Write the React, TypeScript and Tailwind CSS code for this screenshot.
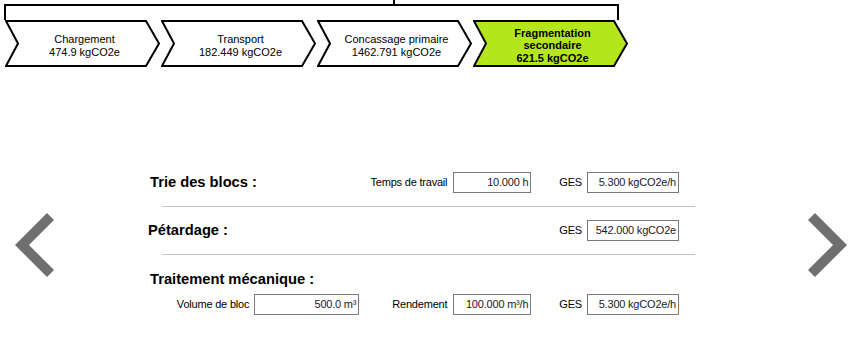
import React from 'react';

type Step = { lines: string[]; active?: boolean };

const steps: Step[] = [
  { lines: ['Chargement', '474.9 kgCO2e'] },
  { lines: ['Transport', '182.449 kgCO2e'] },
  { lines: ['Concassage primaire', '1462.791 kgCO2e'] },
  { lines: ['Fragmentation', 'secondaire', '621.5 kgCO2e'], active: true },
];

function Chevron({ step }: { step: Step }) {
  return (
    <div className="relative w-[155px] h-[47px] flex items-center justify-center">
      <svg className="absolute inset-0" width="155" height="47" viewBox="0 0 155 47">
        <polygon
          points="1,1 141,1 154,23.5 141,46 1,46 13,23.5"
          fill={step.active ? '#b5e61d' : '#ffffff'}
          stroke="#000"
          strokeWidth="2"
        />
      </svg>
      <div
        className={`relative pt-[4px] pl-[4px] text-center text-[11px] text-black ${
          step.active ? 'font-bold leading-[12.5px]' : 'leading-[13px]'
        }`}
      >
        {step.lines.map((l) => (
          <div key={l}>{l}</div>
        ))}
      </div>
    </div>
  );
}

function Field({ value, width }: { value: string; width: string }) {
  return (
    <div
      className={`${width} h-[21px] border border-[#7a7a7a] bg-white flex items-center justify-end pr-[2px] text-[11px] leading-[13px] tracking-[-0.2px] text-[#1a1a2a]`}
    >
      {value}
    </div>
  );
}

function Label({ children }: { children: React.ReactNode }) {
  return <span className="text-[11px] leading-[13px] tracking-[-0.2px] text-black">{children}</span>;
}

function Ges({ value }: { value: string }) {
  return (
    <div className="flex items-center">
      <Label>GES</Label>
      <div className="ml-[5px]">
        <Field value={value} width="w-[92px]" />
      </div>
    </div>
  );
}

function Arrow({ dir }: { dir: 'left' | 'right' }) {
  const pts =
    dir === 'left'
      ? '0,32 32,0 39,7 14,32 39,57 32,64'
      : '40,32 8,0 1,7 26,32 1,57 8,64';
  return (
    <svg width="41" height="65" viewBox="0 0 41 65" className="shrink-0">
      <polygon points={pts} fill="#6f6f6f" />
    </svg>
  );
}

export default function App() {
  return (
    <div className="w-[858px] h-[338px] bg-white overflow-hidden font-['Liberation_Sans',Arial,sans-serif] text-black">
      {/* process steps */}
      <div className="pt-[4px]">
        <div className="relative ml-[4px] w-[615px] h-[16px] border-t-2 border-x-2 border-black">
          <div className="absolute left-[387px] top-[-6px] w-[2px] h-[4px] bg-black" />
        </div>
        <div className="flex ml-[5px] gap-[1px]">
          {steps.map((s) => (
            <Chevron key={s.lines[0]} step={s} />
          ))}
        </div>
      </div>

      {/* detail panel */}
      <div className="flex items-start pt-[105px]">
        <div className="ml-[15px] mt-[41px]">
          <Arrow dir="left" />
        </div>

        <div className="ml-[92px] w-[547px]">
          <div className="flex items-center h-[21px] pr-[16px]">
            <span className="font-bold text-[14.7px] ml-[2px]">Trie des blocs :</span>
            <div className="ml-auto flex items-center">
              <Label>Temps de travail</Label>
              <div className="ml-[6px] flex">
                <Field value="10.000 h" width="w-[78px]" />
              </div>
              <div className="ml-[28px] flex">
                <Ges value="5.300 kgCO2e/h" />
              </div>
            </div>
          </div>

          <div className="ml-[14px] mt-[13px] h-px bg-[#c4c4c4]" />

          <div className="flex items-center h-[21px] mt-[13px] pr-[16px]">
            <span className="font-bold text-[14.7px]">Pétardage :</span>
            <div className="ml-auto flex">
              <Ges value="542.000 kgCO2e" />
            </div>
          </div>

          <div className="ml-[14px] mt-[13px] h-px bg-[#c4c4c4]" />

          <div className="mt-[16px] ml-[2px] font-bold text-[14.7px] leading-[17px]">
            Traitement mécanique :
          </div>
          <div className="flex items-center justify-end h-[21px] mt-[6px] pr-[16px]">
            <Label>Volume de bloc</Label>
            <div className="ml-[5px] flex">
              <Field value="500.0 m³" width="w-[105px]" />
            </div>
            <div className="ml-[33px] flex items-center">
              <Label>Rendement</Label>
            </div>
            <div className="ml-[6px] flex">
              <Field value="100.000 m³/h" width="w-[78px]" />
            </div>
            <div className="ml-[28px] flex">
              <Ges value="5.300 kgCO2e/h" />
            </div>
          </div>
        </div>

        <div className="ml-auto mr-[10px] mt-[41px]">
          <Arrow dir="right" />
        </div>
      </div>
    </div>
  );
}
